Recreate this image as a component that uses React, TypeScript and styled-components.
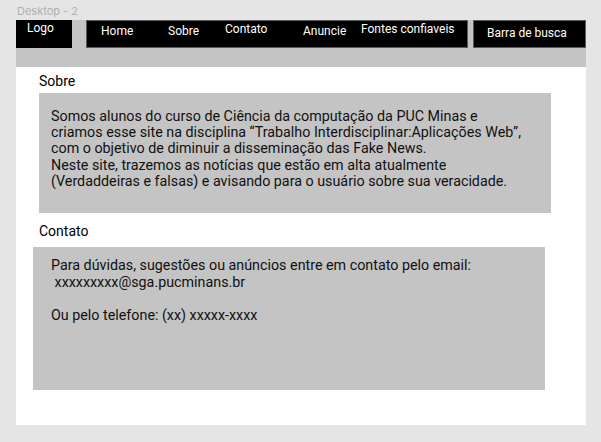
import React from "react";
import styled, { createGlobalStyle } from "styled-components";

const Global = createGlobalStyle`
  html, body { margin: 0; padding: 0; }
  body {
    background: #e5e5e5;
    font-family: Roboto, "Liberation Sans", sans-serif;
    width: 601px;
    height: 442px;
    overflow: hidden;
  }
`;

const Canvas = styled.div`
  padding: 0 15px 0 16px;
`;

const FrameLabel = styled.div`
  box-sizing: border-box;
  height: 20px;
  padding: 5px 0 0 1px;
  font-family: Inter, Roboto, sans-serif;
  font-size: 11px;
  line-height: 13px;
  color: #b0b0b0;
`;

const Frame = styled.div`
  width: 570px;
  height: 405px;
  background: #ffffff;
  display: flex;
  flex-direction: column;
`;

const Header = styled.header`
  height: 47px;
  background: #c4c4c4;
  display: flex;
  align-items: flex-start;
`;

const BlackBox = styled.div<{ $w: number; $ml?: number; $border?: boolean }>`
  box-sizing: border-box;
  width: ${(p) => p.$w}px;
  height: 28px;
  margin-left: ${(p) => p.$ml ?? 0}px;
  background: #000;
  border: ${(p) => (p.$border ? "1px solid #5a5a5a" : "none")};
  color: #fff;
  font-size: 12px;
  line-height: 14px;
`;

const BoxText = styled.span<{ $top: number; $left: number }>`
  display: block;
  padding-top: ${(p) => p.$top}px;
  padding-left: ${(p) => p.$left}px;
  white-space: nowrap;
`;

const Nav = styled.nav`
  display: grid;
  grid-template-columns: 67px 57px 78px 58px auto;
  padding-left: 14px;
  height: 100%;
`;

const NavItem = styled.span<{ $top: number }>`
  padding-top: ${(p) => p.$top}px;
  white-space: nowrap;
`;

const Main = styled.main`
  display: flex;
  flex-direction: column;
  padding-top: 6px;
`;

const SectionTitle = styled.h2`
  margin: 0;
  padding-left: 23px;
  font-size: 14px;
  font-weight: 400;
  line-height: 16.5px;
  color: #000;
`;

const Panel = styled.div<{ $left: number; $h: number; $pt: number; $pl: number; $lh: number; $mt: number }>`
  box-sizing: border-box;
  margin-left: ${(p) => p.$left}px;
  margin-top: ${(p) => p.$mt}px;
  width: 512px;
  height: ${(p) => p.$h}px;
  background: #c4c4c4;
  padding: ${(p) => p.$pt}px 0 0 ${(p) => p.$pl}px;
  font-size: 14.3px;
  line-height: ${(p) => p.$lh}px;
  color: #111;
  white-space: pre;
`;

const Gap = styled.div<{ $h: number }>`
  height: ${(p) => p.$h}px;
`;

export default function App() {
  return (
    <>
      <Global />
      <Canvas>
        <FrameLabel>Desktop - 2</FrameLabel>
        <Frame>
          <Header>
            <BlackBox $w={56}>
              <BoxText $top={1} $left={11}>Logo</BoxText>
            </BlackBox>
            <BlackBox $w={382} $ml={14} $border>
              <Nav>
                <NavItem $top={3}>Home</NavItem>
                <NavItem $top={3}>Sobre</NavItem>
                <NavItem $top={1}>Contato</NavItem>
                <NavItem $top={3}>Anuncie</NavItem>
                <NavItem $top={1}>Fontes confiaveis</NavItem>
              </Nav>
            </BlackBox>
            <BlackBox $w={113} $ml={5} $border>
              <BoxText $top={5} $left={13}>Barra de busca</BoxText>
            </BlackBox>
          </Header>
          <Main>
            <SectionTitle>Sobre</SectionTitle>
            <Panel $left={23} $h={120} $pt={15} $pl={12} $lh={16.4} $mt={3}>
              {"Somos alunos do curso de Ciência da computação da PUC Minas e\ncriamos esse site na disciplina \u201cTrabalho Interdisciplinar:Aplicações Web\u201d,\ncom o objetivo de diminuir a disseminação das Fake News.\nNeste site, trazemos as notícias que estão em alta atualmente\n(Verdaddeiras e falsas) e avisando para o usuário sobre sua veracidade."}
            </Panel>
            <Gap $h={10} />
            <SectionTitle>Contato</SectionTitle>
            <Panel $left={17} $h={143} $pt={10} $pl={18} $lh={16.8} $mt={8}>
              {"Para dúvidas, sugestões ou anúncios entre em contato pelo email:\n xxxxxxxxx@sga.pucminans.br\n\nOu pelo telefone: (xx) xxxxx-xxxx"}
            </Panel>
          </Main>
        </Frame>
      </Canvas>
    </>
  );
}
